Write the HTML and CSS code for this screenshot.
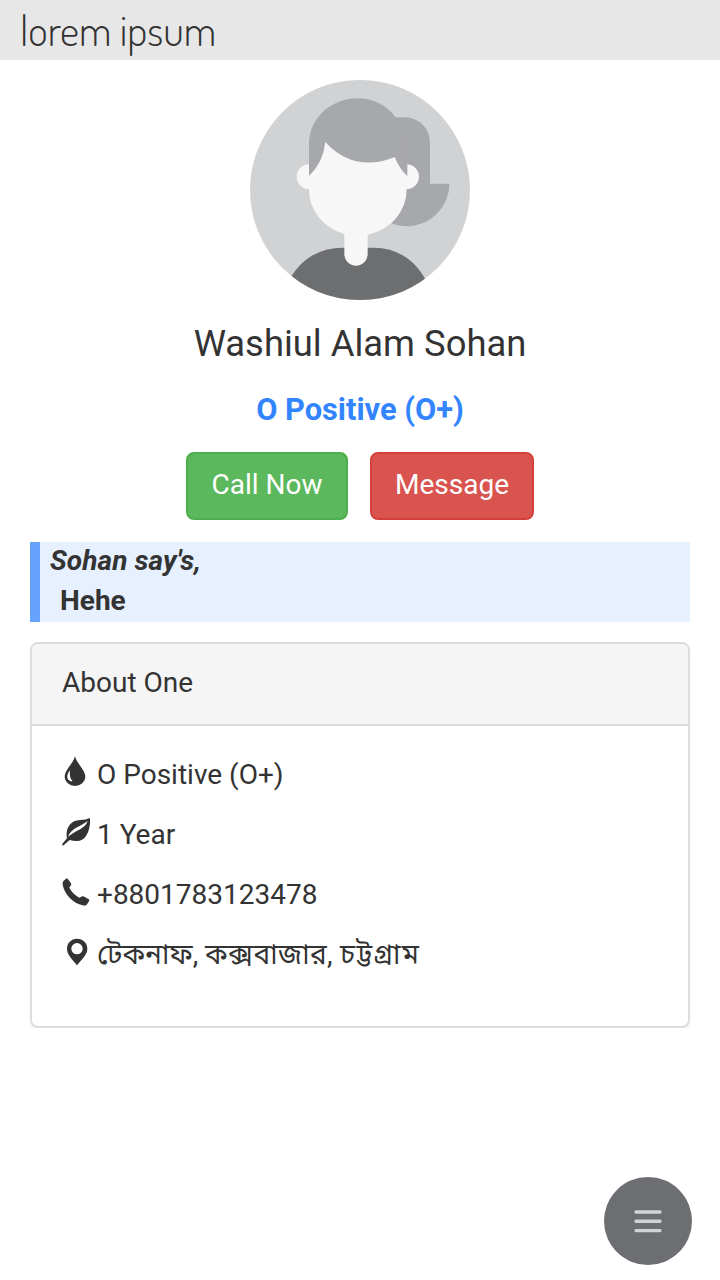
FILE: index.html
```html
<!DOCTYPE html>
<html lang="en">
<head>
<meta charset="utf-8">
<title>lorem ipsum</title>
<link rel="stylesheet" href="styles.css">
</head>
<body>
<header class="topbar"><span class="brand">lorem ipsum</span></header>
<main class="profile">
  <svg class="avatar" viewBox="30 30 660 660">
    <defs><clipPath id="round"><circle cx="360" cy="360" r="330"/></clipPath></defs>
    <g clip-path="url(#round)">
      <rect x="30" y="30" width="660" height="660" fill="#d1d2d4"/>
      <path d="M467 142H495A75 75 0 0 1 570 217V341H628A127 127 0 0 1 453 459L440 300Z" fill="#a7a8ac"/>
      <path d="M140 690V644Q195 533 310 533H400Q510 533 565 644V690Z" fill="#6d6e70"/>
      <path d="M207 283A37 37 0 0 0 207 357A147 138 0 0 0 313 492V552A35 35 0 0 0 383 552V494A147 138 0 0 0 500 357A37 37 0 0 0 500 283L465 190H250Z" fill="#f7f7f7"/>
      <path d="M207 318V220A146 135 0 0 1 353 85Q423 85 467 142L502 200V319Q478 296 464 261C380 297 305 272 256 216Q250 276 207 318Z" fill="#a7a8ac"/>
    </g>
  </svg>
  <h1 class="name">Washiul Alam Sohan</h1>
  <p class="blood">O Positive (O+)</p>
  <div class="actions">
    <button class="btn call">Call Now</button>
    <button class="btn message">Message</button>
  </div>
  <section class="quote">
    <div class="speaker">Sohan say's,</div>
    <div class="speech">Hehe</div>
  </section>
  <section class="panel">
    <h2 class="panel-heading">About One</h2>
    <ul class="facts">
      <li><svg class="icon" viewBox="36 30 84 120"><path fill-rule="evenodd" d="M75 33C79 55 106 74 106 96A31 27 0 0 1 44 96C44 74 71 55 75 33ZM60 76C53 84 46 102 60 108C65 110 68 109 67 107C59 99 59 88 60 76Z"/></svg><span>O Positive (O+)</span></li>
      <li><svg class="icon" viewBox="36 210 84 120"><path fill-rule="evenodd" d="M120 219C122 249 112 288 80 288Q68 288 59 285L39 302L36 298L51 280C45 254 59 226 90 225Q109 225 120 219ZM113 227C99 242 62 248 54 275C78 254 107 251 113 227Z"/></svg><span>1 Year</span></li>
      <li><svg class="icon" viewBox="36 30 84 120"><path d="M50 40Q52 40 54 43L63 55Q65 58 62 62L58 67C62 78 76 93 88 98L97 94Q100 93 103 95L116 103Q120 105 117 109L110 119Q107 123 98 121C70 115 43 88 38 59Q37 50 41 47Z"/></svg><span>+8801783123478</span></li>
      <li><svg class="icon" viewBox="36 210 84 120"><path fill-rule="evenodd" d="M81 221C99 221 112 234 112 251C112 270 94 283 81 301C68 283 51 270 51 251C51 234 64 221 81 221ZM81 234A17 17 0 1 0 81 268A17 17 0 1 0 81 234Z"/></svg><span lang="bn">টেকনাফ, <span class="upazila">কক্সবাজার,</span> <span class="district">চট্টগ্রাম</span></span></li>
    </ul>
  </section>
</main>
<button class="menu" aria-label="Menu"><svg viewBox="0 0 88 88"><path d="M32 35H56M32 44.3H56M32 53.6H56"/></svg></button>
</body>
</html>
```
FILE: styles.css
```css
* { box-sizing: border-box; }
body { margin: 0; background: #fff; color: #333; font: 28px/40px Roboto, "Noto Sans Bengali", "Noto Sans", sans-serif; }
.topbar { height: 60px; padding-left: 20px; background: #e7e7e7; }
.brand { display: block; font: 300 42px/60px Dosis, Lato, sans-serif; }
.profile { display: flex; flex-direction: column; align-items: center; padding: 20px 30px 0; }
.avatar { display: block; width: 220px; height: 220px; }
.name { margin: 20px 0 0; font-size: 36.4px; font-weight: 400; line-height: 48px; }
.blood { margin: 22px 0 0; color: #3385ff; font-size: 30.8px; font-weight: 700; line-height: 40px; }
.actions { display: flex; gap: 22px; margin-top: 22px; }
.btn { height: 68px; padding: 0 23px 2px; border: 2px solid; border-radius: 8px; color: #fff; font: 28px/40px Roboto, sans-serif; }
.call { width: 162px; background: #5cb85c; border-color: #4cae4c; }
.message { width: 164px; background: #d9534f; border-color: #d43f3a; }
.quote { width: 100%; height: 80px; margin-top: 22px; padding-left: 10px; border-left: 10px solid #66a3ff; background: #e6f0ff; font-weight: 700; }
.speaker { font-style: italic; line-height: 38px; letter-spacing: .1px; }
.speech { padding-left: 10px; line-height: 42px; }
.panel { width: 100%; height: 386px; margin-top: 20px; border: 2px solid #ddd; border-radius: 8px; box-shadow: 0 2px 2px rgba(0,0,0,.05); overflow: hidden; }
.panel-heading { margin: 0; height: 82px; padding: 19px 30px; border-bottom: 2px solid #ddd; background: #f5f5f5; font-size: 28px; font-weight: 400; line-height: 40px; }
.facts { display: flex; flex-direction: column; gap: 20px; margin: 0; padding: 29px 30px; list-style: none; }
.facts li { display: flex; gap: 7px; height: 40px; white-space: nowrap; }
.upazila { letter-spacing: .4px; }
.district { letter-spacing: 1.4px; }
.icon { width: 28px; height: 40px; flex: none; fill: #333; }
.menu { position: fixed; right: 28px; bottom: 15px; width: 88px; height: 88px; padding: 0; border: 0; border-radius: 50%; background: #6d6e71; }
.menu svg { display: block; width: 88px; height: 88px; fill: none; stroke: #d1d3d4; stroke-width: 3.4; stroke-linecap: round; }
```
